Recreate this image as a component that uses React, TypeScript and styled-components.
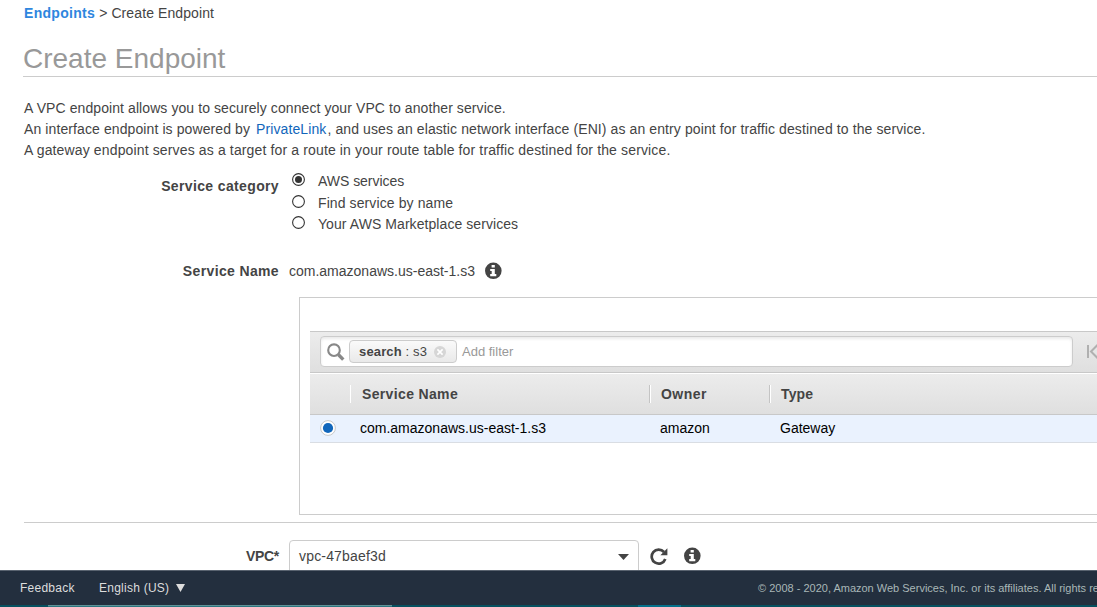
import React from "react";
import styled, { createGlobalStyle } from "styled-components";

const Global = createGlobalStyle`
  * { box-sizing: border-box; }
  html, body { margin: 0; padding: 0; overflow: hidden; background: #fff; }
  body { font-family: "Liberation Sans", Arial, sans-serif; font-size: 14px; color: #444; }
  svg { flex: none; }
`;

const Page = styled.div`
  width: 1097px;
  height: 607px;
  display: flex;
  flex-direction: column;
  overflow: hidden;
  white-space: nowrap;
`;

const Content = styled.main`
  height: 570px;
  overflow: hidden;
  display: flex;
  flex-direction: column;
  & > * { flex: none; }
`;

const Breadcrumb = styled.nav`
  height: 26px;
  padding-left: 24px;
  line-height: 26px;
  letter-spacing: 0.1px;
  b { color: #2e86de; letter-spacing: 0.3px; }
`;

const Title = styled.h1`
  margin: 14px 0 0 23px;
  height: 37px;
  line-height: 37px;
  font-size: 28px;
  font-weight: 400;
  color: #999;
  border-bottom: 1px solid #ccc;
`;

const Intro = styled.div`
  margin: 21px 0 0 24px;
  height: 63px;
`;

const Line = styled.p<{ $ls: number }>`
  margin: 0;
  line-height: 21px;
  letter-spacing: ${(p) => p.$ls}px;
  a { color: #1166bb; margin: 0 1px 0 2px; }
`;

const FormRow = styled.div<{ $h: number }>`
  display: flex;
  height: ${(p) => p.$h}px;
`;

const Label = styled.div<{ $lh: number; $ls?: number }>`
  width: 279px;
  margin-right: 10px;
  text-align: right;
  font-weight: 700;
  line-height: ${(p) => p.$lh}px;
  letter-spacing: ${(p) => p.$ls ?? 0.36}px;
`;

const Options = styled.div`
  display: flex;
  flex-direction: column;
  padding: 9px 0 0 3px;
`;

const Option = styled.label<{ $h: number; $ls?: number }>`
  display: flex;
  height: ${(p) => p.$h}px;
  line-height: 22px;
  letter-spacing: ${(p) => p.$ls ?? 0}px;
  svg { margin: 3px 13px 0 0; }
`;

const Value = styled.span`
  line-height: 20px;
  margin-right: 10px;
`;

const IconBox = styled.span<{ $top: number; $right?: number }>`
  display: block;
  height: 18px;
  margin: ${(p) => p.$top}px ${(p) => p.$right ?? 0}px 0 0;
  svg { display: block; }
`;

const Panel = styled.section`
  margin: 16px 0 0 299px;
  height: 218px;
  border: 1px solid #ccc;
  border-right: 0;
  padding: 33px 0 0 10px;
`;

const Toolbar = styled.div`
  height: 42px;
  display: flex;
  padding: 4px 0 0 10px;
  border-top: 1px solid #c8c8c8;
  border-bottom: 1px solid #c8c8c8;
  background: linear-gradient(#ececec, #dfdfdf);
  overflow: hidden;
`;

const Search = styled.div`
  width: 753px;
  height: 31px;
  display: flex;
  flex: none;
  margin-right: 14px;
  padding: 3px 0 0 6px;
  border: 1px solid #ccc;
  border-radius: 4px;
  background: #fff;
  box-shadow: inset 0 2px 3px rgba(0, 0, 0, 0.09);
`;

const Chip = styled.span`
  width: 108px;
  height: 23px;
  display: flex;
  align-items: center;
  margin: 0 5px 0 4px;
  padding-left: 9px;
  border: 1px solid #ccc;
  border-radius: 4px;
  background: linear-gradient(#fafafa, #e9e9e9);
  font-size: 13px;
  line-height: 19px;
  letter-spacing: 0.15px;
  white-space: pre;
  svg { margin-left: 7px; }
`;

const Placeholder = styled.span`
  line-height: 23px;
  font-size: 13px;
  color: #999;
`;

const Head = styled.div`
  height: 42px;
  display: flex;
  align-items: center;
  border-top: 1px solid #fff;
  border-bottom: 1px solid #c8c8c8;
  background: linear-gradient(#ececec, #dfdfdf);
`;

const HeadCell = styled.div<{ $w: number; $line?: boolean; $ls?: number }>`
  width: ${(p) => p.$w}px;
  height: 18px;
  line-height: 18px;
  padding-left: ${(p) => (p.$line ? 11 : 12)}px;
  font-weight: 700;
  letter-spacing: ${(p) => p.$ls ?? 0.35}px;
  border-left: ${(p) => (p.$line ? "1px solid #c4c4c4" : "0")};
  box-shadow: inset 1px 0 #fff;
`;

const Row = styled.div`
  height: 28px;
  display: flex;
  line-height: 26px;
  color: #000;
  background: #eaf2fe;
  border-bottom: 1px solid #d9dde3;
`;

const Cell = styled.div<{ $w: number }>`
  width: ${(p) => p.$w}px;
  flex: none;
  svg { display: block; margin-top: 5px; }
`;

const Rule = styled.hr`
  margin: 7px 0 17px 24px;
  border: 0;
  height: 1px;
  width: 1073px;
  background: #ccc;
`;

const Select = styled.div`
  width: 350px;
  height: 34px;
  display: flex;
  justify-content: space-between;
  padding: 0 9px;
  margin-right: 11px;
  border: 1px solid #ccc;
  border-radius: 4px;
  line-height: 30px;
  letter-spacing: 0.17px;
  svg { margin-top: 13px; }
`;

const Footer = styled.footer`
  height: 35px;
  display: flex;
  padding-left: 20px;
  background: #232f3e;
  border-top: 1px solid #59636f;
  line-height: 34px;
  color: #ddd;
  font-size: 12px;
  letter-spacing: 0.25px;
`;

const FooterLink = styled.span<{ $w: number }>`
  width: ${(p) => p.$w}px;
  flex: none;
  display: flex;
  svg { margin: 13px 0 0 7px; }
`;

const Copyright = styled.span`
  font-size: 11px;
  letter-spacing: 0;
  color: #a9b7b7;
`;

const Strip = styled.div`
  height: 2px;
  display: flex;
  background: #06505f;
`;

const Segment = styled.span<{ $w: number; $c: string; $top?: string }>`
  width: ${(p) => p.$w}px;
  background: ${(p) => p.$c};
  border-top: ${(p) => (p.$top ? `1px solid ${p.$top}` : "0")};
`;

const Radio = ({ on }: { on?: boolean }) => (
  <svg width="13" height="13" viewBox="0 0 13 13">
    <circle cx="6.5" cy="6.5" r="5.9" fill="#fff" stroke="#333" strokeWidth="1.1" />
    {on && <circle cx="6.5" cy="6.5" r="3.5" fill="#333" />}
  </svg>
);

const Info = () => (
  <svg width="17" height="18" viewBox="0 0 17 18">
    <circle cx="8.3" cy="8.8" r="8.3" fill="#444" />
    <path d="M6.6 3h3.2v2.6H6.6zM5.2 7h4.6v5h1.5v2.2H5.2V12h1.5V9H5.2z" fill="#fff" />
  </svg>
);

const Refresh = () => (
  <svg width="18" height="18" viewBox="0 0 18 18">
    <path d="M14 5A7 7 0 1 0 15.3 12" fill="none" stroke="#444" strokeWidth="2.7" />
    <path d="M17.4 1.2v7h-7z" fill="#444" />
  </svg>
);

export default function App() {
  return (
    <Page>
      <Global />
      <Content>
        <Breadcrumb><b>Endpoints</b> &gt; Create Endpoint</Breadcrumb>
        <Title>Create Endpoint</Title>
        <Intro>
          <Line $ls={0.085}>A VPC endpoint allows you to securely connect your VPC to another service.</Line>
          <Line $ls={0.1}>An interface endpoint is powered by <a>PrivateLink</a>, and uses an elastic network interface (ENI) as an entry point for traffic destined to the service.</Line>
          <Line $ls={0.138}>A gateway endpoint serves as a target for a route in your route table for traffic destined for the service.</Line>
        </Intro>
        <FormRow $h={100}>
          <Label $lh={50}>Service category</Label>
          <Options>
            <Option $h={22} $ls={-0.03}><Radio on />AWS services</Option>
            <Option $h={21} $ls={0.1}><Radio />Find service by name</Option>
            <Option $h={22} $ls={0.07}><Radio />Your AWS Marketplace services</Option>
          </Options>
        </FormRow>
        <FormRow $h={20}>
          <Label $lh={20}>Service Name</Label>
          <Value>com.amazonaws.us-east-1.s3</Value>
          <IconBox $top={1}><Info /></IconBox>
        </FormRow>
        <Panel>
          <Toolbar>
            <Search>
              <svg width="18" height="24" viewBox="0 0 18 24">
                <circle cx="7" cy="10.2" r="5.8" fill="none" stroke="#888" strokeWidth="2.1" />
                <path d="M11.5 14.8l4.8 4.8" stroke="#888" strokeWidth="3.4" />
              </svg>
              <Chip>
                <b>search</b> : s3
                <svg width="12" height="12" viewBox="0 0 12 12">
                  <circle cx="6" cy="6" r="6" fill="#d6d6d6" />
                  <path d="M3.4 3.4l5.2 5.2M8.6 3.4L3.4 8.6" stroke="#fff" strokeWidth="1.6" />
                </svg>
              </Chip>
              <Placeholder>Add filter</Placeholder>
            </Search>
            <svg width="14" height="31" viewBox="0 0 14 31">
              <path d="M1 9v13M11 8.5l-7 7 7 7" fill="none" stroke="#b0b0b0" strokeWidth="2" />
            </svg>
          </Toolbar>
          <Head>
            <Cell $w={40} />
            <HeadCell $w={299}>Service Name</HeadCell>
            <HeadCell $w={120} $line $ls={0.45}>Owner</HeadCell>
            <HeadCell $w={200} $line $ls={0.15}>Type</HeadCell>
          </Head>
          <Row>
            <Cell $w={50}>
              <svg width="36" height="16" viewBox="0 0 36 16">
                <circle cx="18" cy="8" r="7.4" fill="#fff" stroke="#c8c8c8" />
                <circle cx="18" cy="8" r="5.1" fill="#1166bb" />
              </svg>
            </Cell>
            <Cell $w={300}>com.amazonaws.us-east-1.s3</Cell>
            <Cell $w={120}>amazon</Cell>
            <Cell $w={200}>Gateway</Cell>
          </Row>
        </Panel>
        <Rule />
        <FormRow $h={34}>
          <Label $lh={32} $ls={-0.3}>VPC*</Label>
          <Select>
            vpc-47baef3d
            <svg width="11" height="6" viewBox="0 0 11 6"><path d="M0 0h11L5.5 6z" fill="#444" /></svg>
          </Select>
          <IconBox $top={7} $right={16}><Refresh /></IconBox>
          <IconBox $top={7}><Info /></IconBox>
        </FormRow>
      </Content>
      <Footer>
        <FooterLink $w={79}>Feedback</FooterLink>
        <FooterLink $w={659}>
          English (US)
          <svg width="9" height="8" viewBox="0 0 9 8"><path d="M0 0h9L4.5 8z" fill="#ddd" /></svg>
        </FooterLink>
        <Copyright>© 2008 - 2020, Amazon Web Services, Inc. or its affiliates. All rights reserved.</Copyright>
      </Footer>
      <Strip>
        <Segment $w={48} $c="#06505f" />
        <Segment $w={344} $c="#2b7680" $top="#5f9297" />
        <Segment $w={246} $c="#06505f" />
        <Segment $w={43} $c="#04708a" />
      </Strip>
    </Page>
  );
}
